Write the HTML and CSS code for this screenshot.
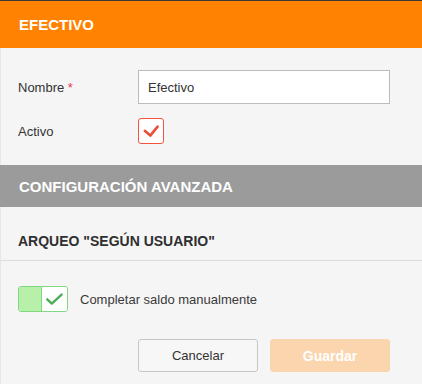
FILE: index.html
```html
<!DOCTYPE html>
<html lang="es">
<head>
<meta charset="utf-8">
<title>Efectivo</title>
<link rel="stylesheet" href="styles.css">
</head>
<body>
<div class="panel">
  <header class="title-bar">EFECTIVO</header>
  <div class="form">
    <div class="row row-name">
      <label class="label">Nombre <span class="req">*</span></label>
      <input class="input" type="text" value="Efectivo">
    </div>
    <div class="row row-active">
      <span class="label">Activo</span>
      <span class="checkbox">
        <svg width="26" height="26" viewBox="0 0 26 26"><polyline points="6.8,12.8 12.3,17.6 19.6,8.6" fill="none" stroke="#ea4f36" stroke-width="2.6" stroke-linecap="round" stroke-linejoin="round"/></svg>
      </span>
    </div>
  </div>
  <div class="section-bar">CONFIGURACIÓN AVANZADA</div>
  <div class="subheading">ARQUEO "SEGÚN USUARIO"</div>
  <div class="toggle-row">
    <span class="toggle">
      <span class="toggle-on"></span>
      <span class="toggle-knob">
        <svg width="25" height="24" viewBox="0 0 25 24"><polyline points="5.2,12.3 9.8,16.6 19.6,7.6" fill="none" stroke="#4cae5a" stroke-width="2.4" stroke-linecap="round" stroke-linejoin="round"/></svg>
      </span>
    </span>
    <span class="toggle-label">Completar saldo manualmente</span>
  </div>
  <div class="actions">
    <button class="btn btn-cancel">Cancelar</button>
    <button class="btn btn-save">Guardar</button>
  </div>
</div>
</body>
</html>
```

FILE: styles.css
```css
html, body {
  margin: 0;
  padding: 0;
  background: #f5f5f5;
}
body {
  font-family: "Liberation Sans", Arial, sans-serif;
  font-size: 13px;
  color: #333;
}
.panel {
  width: 422px;
  height: 384px;
  box-sizing: border-box;
  border-left: 1px solid #e6e6e6;
  background: #f5f5f5;
}
.title-bar {
  height: 47px;
  border-top: 1px solid #3a3a3a;
  margin-left: -1px;
  background: #ff8200;
  color: #fff;
  font-weight: bold;
  font-size: 15px;
  display: flex;
  align-items: center;
  padding-left: 19px;
}
.form {
  padding: 22px 32px 0 17px;
}
.row {
  display: grid;
  grid-template-columns: 120px 1fr;
  align-items: center;
}
.row-active {
  margin-top: 14px;
}
.req {
  color: #e8384f;
}
.input {
  height: 34px;
  box-sizing: border-box;
  border: 1px solid #bcbcbc;
  background: #fff;
  font-family: "Liberation Sans", Arial, sans-serif;
  font-size: 13px;
  color: #333;
  padding: 0 9px;
  margin: 0;
  outline: none;
}
.checkbox {
  width: 26px;
  height: 26px;
  box-sizing: border-box;
  border: 1px solid #f1543a;
  border-radius: 3px;
  background: #fff;
  display: flex;
  align-items: center;
  justify-content: center;
}
.checkbox svg {
  display: block;
  margin: -1px;
}
.section-bar {
  margin-top: 21px;
  margin-left: -1px;
  height: 42px;
  background: #9b9b9b;
  color: #fff;
  font-weight: bold;
  font-size: 15px;
  display: flex;
  align-items: center;
  padding-left: 19px;
}
.subheading {
  font-weight: bold;
  font-size: 14px;
  line-height: 16px;
  padding: 26px 0 11px 17px;
  border-bottom: 1px solid #dcdcdc;
  color: #2f2f2f;
}
.toggle-row {
  margin-top: 25px;
  padding-left: 17px;
  display: flex;
  align-items: center;
  height: 26px;
}
.toggle {
  width: 50px;
  height: 26px;
  box-sizing: border-box;
  border: 1px solid #80d882;
  border-radius: 3px;
  display: flex;
  overflow: hidden;
}
.toggle-on {
  width: 24px;
  background: #b8f0aa;
}
.toggle-knob {
  flex: 1;
  background: #fff;
  border-left: 1px solid #80d882;
  display: flex;
  align-items: center;
  justify-content: center;
}
.toggle-label {
  margin-left: 12px;
  color: #3a3a3a;
}
.actions {
  margin-top: 27px;
  padding-right: 32px;
  display: flex;
  justify-content: flex-end;
  gap: 12px;
}
.btn {
  width: 120px;
  height: 33px;
  box-sizing: border-box;
  border-radius: 3px;
  font-family: "Liberation Sans", Arial, sans-serif;
  font-size: 13px;
  margin: 0;
  padding: 0;
}
.btn-cancel {
  border: 1px solid #c6c6c6;
  background: #f7f7f7;
  color: #333;
}
.btn-save {
  border: 1px solid #fad5ad;
  background: #fad5ad;
  color: #fff;
  font-weight: bold;
  font-size: 14px;
}
```
